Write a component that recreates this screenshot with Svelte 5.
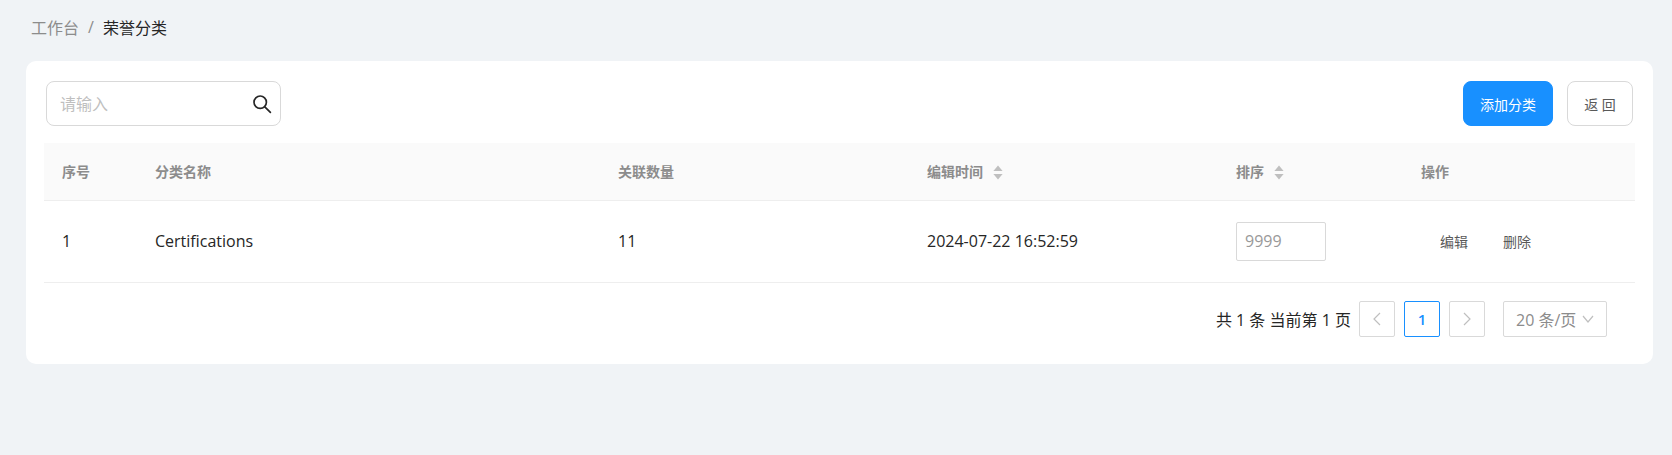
<script>
  const columns = [
    { label: "序号", width: 93 },
    { label: "分类名称", width: 463 },
    { label: "关联数量", width: 309 },
    { label: "编辑时间", width: 309, sort: true },
    { label: "排序", width: 185, sort: true },
    { label: "操作", width: 232 },
  ];

  let rows = [
    { id: 1, name: "Certifications", count: 11, time: "2024-07-22 16:52:59", sort: 9999 },
  ];
</script>

<div class="page">
  <nav class="crumbs">
    <span class="link">工作台</span>
    <span class="sep">/</span>
    <span class="current">荣誉分类</span>
  </nav>

  <section class="card">
    <div class="toolbar">
      <div class="search">
        <input type="text" placeholder="请输入" />
        <svg width="20" height="20" viewBox="0 0 20 20" fill="none" stroke="#262626" stroke-width="1.7">
          <circle cx="8.2" cy="8.2" r="6.2" />
          <path d="M12.8 12.8 L18.4 18.4" stroke-linecap="round" />
        </svg>
      </div>
      <div class="actions">
        <button class="btn primary">添加分类</button>
        <button class="btn">返 回</button>
      </div>
    </div>

    <table>
      <colgroup>
        {#each columns as col}
          <col style="width: {col.width}px" />
        {/each}
      </colgroup>
      <thead>
        <tr>
          {#each columns as col}
            <th>
              {col.label}
              {#if col.sort}
                <svg class="sorter" width="10" height="15" viewBox="0 0 10 15" fill="#bfbfbf">
                  <path d="M5 0.5 L9.6 6 H0.4 Z" />
                  <path d="M5 14.5 L9.6 9 H0.4 Z" />
                </svg>
              {/if}
            </th>
          {/each}
        </tr>
      </thead>
      <tbody>
        {#each rows as row}
          <tr>
            <td>{row.id}</td>
            <td>{row.name}</td>
            <td>{row.count}</td>
            <td>{row.time}</td>
            <td><input class="sort-input" type="text" value={row.sort} /></td>
            <td>
              <div class="ops">
                <span>编辑</span>
                <span>删除</span>
              </div>
            </td>
          </tr>
        {/each}
      </tbody>
    </table>

    <div class="pager">
      <span class="total">共 1 条 当前第 1 页</span>
      <span class="box">
        <svg width="12" height="14" viewBox="0 0 12 14" fill="none" stroke="#bfbfbf" stroke-width="1.2"><path d="M9 1 L3 7 L9 13" /></svg>
      </span>
      <span class="box active">1</span>
      <span class="box">
        <svg width="12" height="14" viewBox="0 0 12 14" fill="none" stroke="#bfbfbf" stroke-width="1.2"><path d="M3 1 L9 7 L3 13" /></svg>
      </span>
      <span class="size">
        20 条/页
        <svg width="12" height="8" viewBox="0 0 12 8" fill="none" stroke="#bfbfbf" stroke-width="1.2"><path d="M1 1 L6 7 L11 1" /></svg>
      </span>
    </div>
  </section>
</div>

<style>
  :global(body) {
    background: #f0f3f6;
    font-family: "Open Sans", "Noto Sans CJK SC", sans-serif;
  }

  .page {
    min-height: 455px;
    padding: 15px 19px 0 26px;
    box-sizing: border-box;
  }

  .crumbs {
    display: flex;
    align-items: center;
    height: 24px;
    padding-left: 5px;
    margin-bottom: 22px;
    font-size: 16px;
    color: #8c8c8c;
  }

  .sep {
    margin: 0 9px;
  }

  .current {
    color: #262626;
  }

  .card {
    background: #fff;
    border-radius: 10px;
    padding: 20px 18px 27px;
  }

  .toolbar {
    display: flex;
    justify-content: space-between;
    padding: 0 2px;
    margin-bottom: 17px;
  }

  .search {
    display: flex;
    align-items: center;
    width: 235px;
    height: 45px;
    box-sizing: border-box;
    border: 1px solid #d9d9d9;
    border-radius: 8px;
    padding: 0 8px 0 13px;
  }

  .search input {
    flex: 1;
    min-width: 0;
    border: none;
    outline: none;
    padding: 0;
    font: inherit;
    font-size: 16px;
  }

  .search input::placeholder {
    color: #bfbfbf;
  }

  .actions {
    display: flex;
    gap: 14px;
  }

  .btn {
    height: 45px;
    width: 66px;
    box-sizing: border-box;
    border: 1px solid #d9d9d9;
    border-radius: 8px;
    background: #fff;
    color: #595959;
    font: inherit;
    font-size: 14px;
    padding: 0;
  }

  .btn.primary {
    width: 90px;
    background: #1890ff;
    border-color: #1890ff;
    color: #fff;
  }

  table {
    width: 1591px;
    table-layout: fixed;
    border-collapse: collapse;
  }

  th {
    height: 57px;
    padding: 0 18px;
    box-sizing: border-box;
    background: #fafafa;
    border-bottom: 1px solid #eee;
    font-size: 14px;
    font-weight: 700;
    color: #8c8c8c;
    text-align: left;
  }

  .sorter {
    margin-left: 6px;
    vertical-align: -3px;
  }

  td {
    height: 82px;
    padding: 0 18px;
    box-sizing: border-box;
    border-bottom: 1px solid #eee;
    font-size: 16px;
    color: #262626;
  }

  .sort-input {
    display: block;
    width: 90px;
    height: 39px;
    box-sizing: border-box;
    border: 1px solid #d9d9d9;
    border-radius: 2px;
    padding: 0 8px;
    font: inherit;
    font-size: 16px;
    color: #999;
    outline: none;
  }

  .ops {
    display: flex;
    gap: 35px;
    padding-left: 19px;
    font-size: 14px;
    color: #595959;
  }

  .pager {
    display: flex;
    align-items: center;
    justify-content: flex-end;
    margin-top: 18px;
    padding-right: 28px;
    font-size: 16px;
    color: #262626;
  }

  .total {
    margin-right: 8px;
  }

  .box {
    display: flex;
    align-items: center;
    justify-content: center;
    width: 36px;
    height: 36px;
    box-sizing: border-box;
    border: 1px solid #d9d9d9;
    border-radius: 2px;
    margin-right: 9px;
  }

  .box.active {
    border-color: #1890ff;
    color: #1890ff;
    font-weight: 600;
    font-size: 15px;
  }

  .size {
    display: flex;
    align-items: center;
    justify-content: space-between;
    width: 104px;
    height: 36px;
    box-sizing: border-box;
    border: 1px solid #d9d9d9;
    border-radius: 2px;
    margin-left: 9px;
    padding: 0 12px;
    color: #8c8c8c;
  }
</style>
